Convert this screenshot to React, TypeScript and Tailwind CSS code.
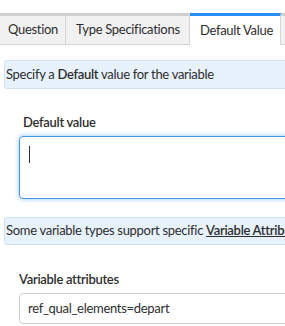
export default function App() {
  const font = { fontFamily: "Lato, 'Open Sans', sans-serif", letterSpacing: "-0.3px" };
  return (
    <div className="w-[285px] h-[326px] overflow-hidden bg-white" style={font}>
      <div className="w-[420px] pt-[13px] text-[13px] text-[#2e2e2e]">
        {/* tabs */}
        <div className="flex h-[32px] border-b border-[#d6d6d6]">
          <div className="flex items-center w-[66px] pl-[8px] bg-[#f1f1f1] border-t-[3px] border-t-[#cfcfcf] border-r border-r-[#d6d6d6]">Question</div>
          <div className="flex items-center w-[124px] pl-[10px] bg-[#f1f1f1] border-t-[3px] border-t-[#cfcfcf] border-r border-r-[#d6d6d6]">Type Specifications</div>
          <div className="flex items-center w-[91px] pl-[10px] bg-white border-t-[3px] border-t-[#278efc] border-r border-r-[#d6d6d6] -mb-px">Default Value</div>
          <div className="flex-1 bg-[#f1f1f1] border-t-[3px] border-t-[#cfcfcf]"></div>
        </div>

        <div className="pl-[4px] mt-[15px]">
          <div className="h-[29px] flex items-center pl-px bg-[#e8f2fd] border border-[#cfe1f5] rounded-[3px] whitespace-nowrap">
            <span>Specify a <b className="font-semibold">Default</b> value for the variable</span>
          </div>
        </div>

        <div className="pl-[19px]">
          <div className="mt-[24px] pl-[4px] font-semibold leading-[18px]">Default value</div>
          <div className="mt-[5px] h-[63px] border border-[#4b94e0] rounded-[4px] shadow-[0_0_5px_#8fc3f5] relative">
            <div className="absolute left-[9px] top-[9px] w-px h-[17px] bg-[#333]"></div>
          </div>
        </div>

        <div className="pl-[4px] mt-[18px]">
          <div className="h-[28px] flex items-center pl-px bg-[#e8f2fd] border border-[#cfe1f5] rounded-[3px] whitespace-nowrap">
            <span>Some variable types support specific <b className="font-semibold underline">Variable Attributes</b></span>
          </div>
        </div>

        <div className="pl-[19px]">
          <div className="mt-[25px] font-semibold leading-[18px]">Variable attributes</div>
          <div className="mt-[5px] h-[31px] flex items-center pl-[8px] border border-[#cfcfcf] rounded-[4px] whitespace-nowrap">ref_qual_elements=depart</div>
        </div>
      </div>
    </div>
  );
}
